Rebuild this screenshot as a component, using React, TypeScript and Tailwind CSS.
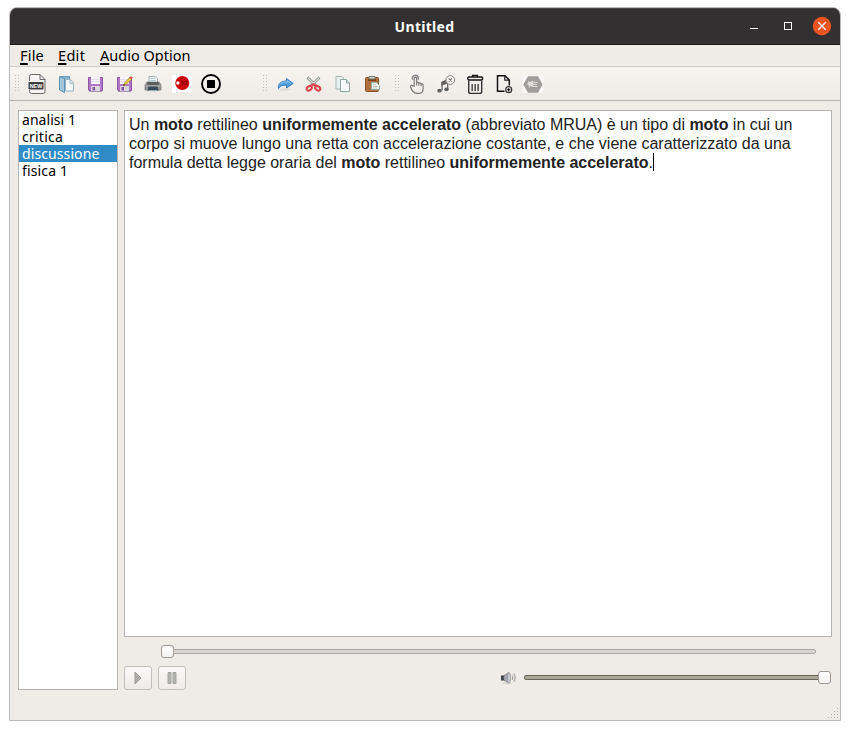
import React from "react";

const ui = "font-['Noto_Sans','Open_Sans',sans-serif]";

function Icon({ children, className = "" }: { children: React.ReactNode; className?: string }) {
  return (
    <svg width="24" height="24" viewBox="0 0 24 24" fill="none" className={"block shrink-0 " + className}>
      {children}
    </svg>
  );
}

function Grip() {
  return (
    <svg width="5" height="17" viewBox="0 0 5 17" className="block shrink-0" shapeRendering="crispEdges">
      {[0, 3, 6, 9, 12, 15].map((y) => (
        <g key={y} fill="#c3c0bb">
          <rect x="0" y={y} width="1" height="1" />
          <rect x="3" y={y} width="1" height="1" />
        </g>
      ))}
    </svg>
  );
}

const NewIcon = () => (
  <Icon>
    <path d="M4.500 9V4.500a2 2 0 0 1 2-2H15l5 5V19.500a2 2 0 0 1-2 2H6.500a2 2 0 0 1-2-2V18" stroke="#6a6a6a" fill="#f6f4f2" />
    <path d="M15 2.500V7.500H20" stroke="#6a6a6a" />
    <rect x="3.500" y="10" width="15" height="7.500" rx="1" fill="#3e3e3e" />
    <text x="11" y="16" textAnchor="middle" textLength="12.500" lengthAdjust="spacingAndGlyphs" fontSize="6" fontWeight="bold" fill="#fff" fontFamily="Liberation Sans, sans-serif">NEW</text>
  </Icon>
);

const OpenIcon = () => (
  <Icon>
    <path d="M6.500 4.500h9v14h-9z" fill="#86b4cf" stroke="#6b9dbb" />
    <path d="M5.500 4.500l5 2v14l-5-2.500z" fill="#a0c6dc" stroke="#5f93b2" />
    <path d="M11.500 7.500h5l3 3.500v8h-8z" fill="#f4f8f8" stroke="#9ab4bf" />
    <path d="M16 8v3.500h3.500" fill="#d5e2e6" stroke="#a9bdc5" />
  </Icon>
);

const Floppy = () => (
  <>
    <path d="M5.500 5.500h14v13h-13.500l-.5-.5z" fill="#ae78c5" stroke="#8c55a5" />
    <rect x="8" y="5" width="9" height="7" fill="#f8f6fa" />
    <path d="M8 7.500h9M8 9.500h9" stroke="#e4dce8" />
    <rect x="8" y="14" width="9" height="5" fill="#ddd6e0" />
    <rect x="9.500" y="15" width="2.500" height="3.500" fill="#85569a" />
    <path d="M6 19.500h13" stroke="#a992b2" />
  </>
);

const SaveIcon = () => (
  <Icon>
    <Floppy />
  </Icon>
);

const SaveAsIcon = () => (
  <Icon>
    <Floppy />
    <path d="M11.500 13.500l1-2.700 5.500-5.500 1.700 1.700-5.500 5.500z" fill="#f0cc44" stroke="#94782f" strokeWidth=".7" />
    <path d="M17.500 5.700l1.500-1.700 2 1.800-1.700 1.700z" fill="#d95a50" />
    <path d="M11.200 13.800l.8-1.800 1 1z" fill="#222" />
  </Icon>
);

const PrintIcon = () => (
  <Icon>
    <path d="M8 11V4.500h6.500l2 2V11" fill="#f3f8fa" stroke="#a3b3bb" />
    <path d="M9.500 6.500h5M9.500 8.500h5" stroke="#a7cadb" />
    <path d="M6 10h12l2 3v5H4v-5z" fill="#919392" stroke="#7c7e7d" strokeWidth=".8" />
    <path d="M6.500 10h11l.5 3H6z" fill="#5b6061" />
    <path d="M4.500 14h15" stroke="#b9bab9" />
    <path d="M7.500 14.500h9l1 4.500h-11z" fill="#394a57" />
    <path d="M7.500 18.700h9" stroke="#a3bfd0" />
  </Icon>
);

const RecordIcon = () => (
  <Icon>
    <rect x="2" y="3" width="20" height="18" fill="#fff" />
    <circle cx="12.300" cy="11" r="7" fill="#cc0507" />
    <circle cx="7.900" cy="11" r="1.700" fill="#fff" />
    <text x="10.300" y="12.900" fontSize="5" textLength="8" lengthAdjust="spacingAndGlyphs" fontWeight="bold" fill="#830709" fontFamily="Liberation Sans, sans-serif">REC</text>
    <path d="M6 20.500h12" stroke="#ebe9e9" />
  </Icon>
);

const StopIcon = () => (
  <Icon>
    <circle cx="12" cy="12" r="9" stroke="#000" strokeWidth="1.900" />
    <rect x="8" y="8" width="8" height="8" rx=".5" fill="#000" />
  </Icon>
);

const RedoIcon = () => (
  <Icon>
    <ellipse cx="11" cy="17.500" rx="6.500" ry="1" fill="#ded9d3" />
    <path d="M5.500 16.500c-1-4.500 2.500-7.500 8-7.500V6.500l6.700 5-6.700 4.500v-2.800c-4-.2-6.500.5-8 3.300z" fill="#4d9fe0" stroke="#3a7cba" strokeLinejoin="round" />
    <path d="M6.500 13c1.500-2.500 4-3 8-3V8.700l3.400 2.700" stroke="#9bcef3" strokeWidth=".9" />
  </Icon>
);

const CutIcon = () => (
  <Icon>
    <path d="M5.500 5.500L14.500 14.500M17.500 5.500L8.500 14.500" stroke="#858986" strokeWidth="2.800" />
    <path d="M6 6L14 14M17 6L9 14" stroke="#dce0dd" strokeWidth="1.200" />
    <ellipse cx="7.300" cy="16.300" rx="2.800" ry="2" transform="rotate(-35 7.300 16.300)" stroke="#dc444b" strokeWidth="2" />
    <ellipse cx="15.700" cy="16.300" rx="2.800" ry="2" transform="rotate(35 15.700 16.300)" stroke="#dc444b" strokeWidth="2" />
    <path d="M8.500 14l3-1.800 3 1.800" stroke="#dc444b" strokeWidth="2" />
  </Icon>
);

const CopyIcon = () => (
  <Icon>
    <path d="M5 4.500h6l2.500 3v9.500H5z" fill="#eaf2f1" stroke="#a3b8b6" />
    <path d="M9.500 7.500h6l3 3.500v8.500h-9z" fill="#f7faf9" stroke="#8ea6a3" />
    <path d="M15.500 7.500V11h3" fill="#d6e4e1" stroke="#8ea6a3" />
  </Icon>
);

const PasteIcon = () => (
  <Icon>
    <rect x="5.500" y="5.500" width="13" height="14" rx="1" fill="#b0703f" stroke="#895327" />
    <rect x="8" y="7" width="8" height="2" fill="#754018" />
    <path d="M9 4.500h6v2.500H9z" fill="#d8d7d2" stroke="#777871" />
    <path d="M11.500 10.500h5l3 3v4h-8z" fill="#f4f8f7" stroke="#93a9a6" />
    <path d="M13 12.500h3M13 14.500h5M13 16h4" stroke="#a8bab8" strokeWidth=".8" />
  </Icon>
);

const HandIcon = () => (
  <Icon>
    <g transform="translate(-1 .3)">
      <path d="M10.200 14V6.200c0-1.800 2.500-1.800 2.500 0v4.300c.8-1 2-.6 2.200.5.800-.7 2-.3 2.200.7 1-.5 2 .2 2 1.300v3.500c0 2.600-1.500 4.500-4 4.500h-2.400c-3 0-5.200-3.500-6.200-6.500-.3-1.700 1.200-2 2.100-.9z" fill="#f2efeb" stroke="#777" strokeWidth="1.150" strokeLinejoin="round" />
      <path d="M12.700 10.500v2.700M14.900 11v2.500M17.100 11.700v2.200" stroke="#777" />
      <path d="M8.700 7.500C7.700 5.300 8.900 2.900 11.300 2.900c2.400 0 3.700 2.400 2.700 4.600" stroke="#888" strokeWidth="1.500" />
    </g>
  </Icon>
);

const MusicIcon = () => (
  <Icon>
    <rect x="2" y="2" width="20" height="19" fill="#f5f2ee" fillOpacity=".5" />
    <path d="M8 18.500V10M13.700 10V17" stroke="#696969" strokeWidth="1.300" />
    <path d="M7.500 9.800l6-2.800v4.500l-6 2.300z" fill="#606060" />
    <ellipse cx="5.500" cy="18.700" rx="2.300" ry="1.900" fill="#606060" />
    <ellipse cx="12.500" cy="17.300" rx="2.200" ry="1.900" fill="#606060" />
    <circle cx="16.300" cy="8" r="4.400" fill="#f4f1ed" stroke="#888" />
    <path d="M14.700 6.400l3.200 3.200M17.900 6.400l-3.200 3.200" stroke="#777" strokeWidth="1.100" />
  </Icon>
);

const TrashIcon = () => (
  <Icon>
    <path d="M9.500 5V3.300h5V5" stroke="#151515" strokeWidth="1.300" />
    <rect x="4.700" y="5" width="15" height="3" rx="1.400" fill="#eeeae6" stroke="#151515" strokeWidth="1.400" />
    <path d="M5.700 8.300v11.200c0 1.200.8 1.900 1.900 1.900h9.200c1.100 0 1.900-.7 1.900-1.900V8.300" stroke="#333" strokeWidth="1.400" />
    <path d="M9.200 12v7M12.200 12v7M15.200 12v7" stroke="#555" strokeWidth="1.600" />
  </Icon>
);

const AddFileIcon = () => (
  <Icon>
    <path d="M12.500 19.300h-7V3.700H13l4.300 4.300v5.500" stroke="#111" strokeWidth="1.500" />
    <path d="M12.800 4v4.200h4.300" stroke="#222" strokeWidth="1.200" />
    <circle cx="16.700" cy="17.700" r="3" fill="#f3f0ec" stroke="#333" strokeWidth="1.200" />
    <path d="M15 17.700h3.400M16.700 16v3.400" stroke="#111" strokeWidth="1.100" />
  </Icon>
);

const HexIcon = () => (
  <Icon>
    <rect x="2" y="4" width="20" height="17" fill="#fbfaf9" />
    <path d="M7 4.300h10l4.700 8.200L17 20.700H7L2.200 12.500z" fill="#a19e9c" />
    <path d="M7 9l2 1 3-1.500v6.500l-3-1-1 2.500zM6.500 11h2v2h-2z" fill="#dedbd8" />
    <path d="M11.500 10.500h5M11.500 12.500h4.500M11.500 14.500h5" stroke="#dedbd8" />
  </Icon>
);

function Titlebar() {
  return (
    <div className="flex h-[37px] shrink-0 items-center border-b border-[#1b1a1a] bg-[#333031] shadow-[inset_0_1px_0_#494647]">
      <div className="w-[110px]" />
      <div className={`${ui} flex-1 pt-[2px] pr-px text-center text-[14px] leading-5 font-bold tracking-[0.3px] text-white`}>Untitled</div>
      <div className="flex w-[110px] items-center justify-end pr-[8px]">
        <svg width="8" height="8" className="mr-[26px]" shapeRendering="crispEdges">
          <rect x="0" y="6" width="8" height="1" fill="#fff" />
        </svg>
        <svg width="8" height="8" className="mr-[20px]" shapeRendering="crispEdges">
          <rect x=".5" y=".5" width="7" height="7" fill="none" stroke="#fff" />
        </svg>
        <svg width="20" height="20" viewBox="0 0 20 20">
          <circle cx="10" cy="10" r="9.200" fill="#e95420" />
          <path d="M6.300 6.300l7.400 7.400M13.700 6.300l-7.400 7.400" stroke="#fff" strokeWidth="1.300" />
        </svg>
      </div>
    </div>
  );
}

function MenuItem({ label, className = "" }: { label: string; className?: string }) {
  return (
    <div className={"whitespace-nowrap " + className}>
      <u className="decoration-[1.5px] underline-offset-[2px]">{label[0]}</u>
      {label.slice(1)}
    </div>
  );
}

function MenuBar() {
  return (
    <div className={`${ui} flex h-[22px] shrink-0 border-b border-[#cfccc8] pl-[10px] text-[14.5px] leading-[21px] text-black`}>
      <MenuItem label="File" className="w-[38px] tracking-[0.2px]" />
      <MenuItem label="Edit" className="w-[42px] tracking-[0.3px]" />
      <MenuItem label="Audio Option" />
    </div>
  );
}

function ToolBar() {
  return (
    <div className="flex h-[34px] shrink-0 items-center border-b border-[#b5b2ae] bg-linear-to-b from-[#f8f5f1] to-[#edeae6] pl-[5px]">
      <Grip />
      <div className="ml-[5px] flex gap-[5px]">
        <NewIcon /><OpenIcon /><SaveIcon /><SaveAsIcon /><PrintIcon /><RecordIcon /><StopIcon />
      </div>
      <div className="ml-[40px]"><Grip /></div>
      <div className="ml-[5px] flex gap-[5px]">
        <RedoIcon /><CutIcon /><CopyIcon /><PasteIcon />
      </div>
      <div className="ml-[11px]"><Grip /></div>
      <div className="ml-[5px] flex gap-[5px]">
        <HandIcon /><MusicIcon /><TrashIcon /><AddFileIcon /><HexIcon />
      </div>
    </div>
  );
}

const notes = [
  { name: "analisi 1", spacing: "tracking-[0.05px]" },
  { name: "critica", spacing: "tracking-[0.25px]" },
  { name: "discussione", spacing: "tracking-[0.1px]" },
  { name: "fisica 1", spacing: "tracking-[0.15px]" },
];

function NoteList() {
  return (
    <div className={`${ui} h-[580px] w-[100px] shrink-0 border border-[#b6b2ae] bg-white text-[14px] leading-[17px] text-black`}>
      {notes.map(({ name, spacing }) => (
        <div key={name} className={`h-[17px] pl-[3px] whitespace-nowrap ${spacing} ${name === "discussione" ? "bg-[#308cc6] text-white" : ""}`}>
          {name}
        </div>
      ))}
    </div>
  );
}

function Editor() {
  return (
    <div className="h-[527px] border border-[#b6b2ae] bg-white pt-[4px] pl-[4px] font-['Liberation_Sans',Arial,sans-serif] text-[16px] leading-[19px] tracking-[-0.01px] whitespace-nowrap text-[#222]">
      <div>Un <b>moto</b> rettilineo <b>uniformemente accelerato</b> (abbreviato MRUA) è un tipo di <b>moto</b> in cui un</div>
      <div>corpo si muove lungo una retta con accelerazione costante, e che viene caratterizzato da una</div>
      <div className="flex">
        <span>formula detta legge oraria del <b>moto</b> rettilineo <b>uniformemente accelerato</b>.</span>
        <span className="h-[18px] w-px bg-black" />
      </div>
    </div>
  );
}

const knob = "h-[13px] w-[13px] shrink-0 rounded-[3px] border border-[#9c9994] bg-linear-to-b from-white to-[#f4f3f1]";
const button = "flex h-[24px] w-[28px] items-center justify-center rounded-[3px] border border-[#c2beba] bg-linear-to-b from-[#fbfaf9] to-[#edeae7]";

function Player() {
  return (
    <>
      <div className="mt-[8px] ml-[37px] flex h-[13px] w-[655px] items-center">
        <div className={knob} />
        <div className="-ml-px h-[5px] flex-1 rounded-r-[2px] border border-[#aaa7a4] bg-[#d7d4d1]" />
      </div>
      <div className="mt-[8px] flex h-[24px] items-start pr-px">
        <div className={button}>
          <svg width="8" height="14" viewBox="0 0 8 14" className="-ml-px">
            <path d="M1 1l6 6-6 6z" fill="#adada9" stroke="#9b9b97" />
          </svg>
        </div>
        <div className={`${button} ml-[6px]`}>
          <svg width="10" height="12" viewBox="0 0 10 12" className="-ml-px">
            <path d="M1 .5h3v11H1zM6 .5h3v11H6z" fill="#b3b3af" stroke="#a3a39f" />
          </svg>
        </div>
        <svg width="17" height="16" viewBox="0 0 17 16" className="mt-[4px] ml-[314px]" fill="none">
          <ellipse cx="7" cy="13.500" rx="5" ry=".8" fill="#d8d4cf" />
          <path d="M1 5.500h4v5H1z" fill="#404244" />
          <path d="M4 5.500l5-3v10.500L4 10.500z" fill="#a9aab1" stroke="#777a80" strokeWidth=".7" />
          <ellipse cx="9" cy="7.700" rx="1.400" ry="5" fill="#d6d7dc" stroke="#888b92" strokeWidth=".8" />
          <path d="M12 5.500c1 1.500 1 3 0 4.500M13.700 3.700c1.900 2.500 1.900 5.500 0 8" stroke="#8b8c8c" strokeWidth="1" />
        </svg>
        <div className="mt-[9px] ml-[7px] h-[5px] flex-1 rounded-l-[2px] border border-[#69655a] bg-[#aaa797]" />
        <div className={`${knob} mt-[5px] -ml-px`} />
      </div>
    </>
  );
}

function SizeGrip() {
  return (
    <svg width="11" height="11" viewBox="0 0 11 11" className="mr-px mb-px block" shapeRendering="crispEdges">
      {[0, 1, 2, 3].map((r) =>
        Array.from({ length: r + 1 }, (_, c) => (
          <rect key={`${r}-${c}`} x={9 - c * 3} y={r * 3} width="1" height="1" fill="#b8b5b1" />
        ))
      )}
    </svg>
  );
}

export default function App() {
  return (
    <div className="h-[730px] w-[850px] overflow-hidden bg-white pt-[7px] pl-[9px]">
      <div className="flex h-[714px] w-[832px] flex-col overflow-hidden rounded-t-[8px] border border-[#bdbbb9] bg-[#efebe7]">
        <Titlebar />
        <MenuBar />
        <ToolBar />
        <div className="mt-[9px] flex gap-[6px] px-[8px]">
          <NoteList />
          <div className="min-w-0 flex-1">
            <Editor />
            <Player />
          </div>
        </div>
        <div className="mt-auto flex justify-end">
          <SizeGrip />
        </div>
      </div>
    </div>
  );
}
